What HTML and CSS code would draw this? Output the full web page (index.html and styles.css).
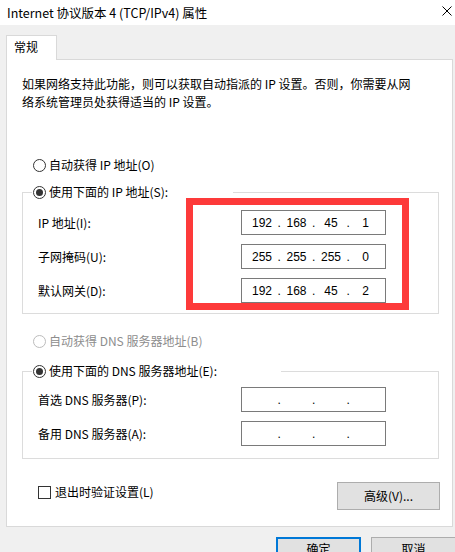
FILE: index.html
```html
<!DOCTYPE html>
<html lang="zh-CN">
<head>
<meta charset="utf-8">
<title>Internet 协议版本 4 (TCP/IPv4) 属性</title>
<link rel="stylesheet" href="styles.css">
</head>
<body>
<div class="window">
  <div class="titlebar">
    <span class="title">Internet 协议版本 4 (TCP/IPv4) 属性</span>
    <svg class="close" width="10" height="10" viewBox="0 0 10 10"><path d="M0.5 0.5 L9.5 9.5 M9.5 0.5 L0.5 9.5" stroke="#000" stroke-width="1" fill="none"/></svg>
  </div>
  <div class="body">
    <div class="tabs"><div class="tab">常规</div></div>
    <div class="panel">
      <p class="desc">如果网络支持此功能，则可以获取自动指派的 IP 设置。否则，你需要从网<br>络系统管理员处获得适当的 IP 设置。</p>

      <div class="option first"><span class="radio"></span><span>自动获得 IP 地址(O)</span></div>

      <fieldset class="group ip-group">
        <legend class="legend ip-legend"><span class="radio on"></span><span>使用下面的 IP 地址(S):</span></legend>
        <div class="row"><span>IP 地址(I):</span>
          <div class="ipbox"><span class="seg">192</span><span class="dot">.</span><span class="seg">168</span><span class="dot">.</span><span class="seg">45</span><span class="dot">.</span><span class="seg">1</span></div>
        </div>
        <div class="row"><span>子网掩码(U):</span>
          <div class="ipbox"><span class="seg">255</span><span class="dot">.</span><span class="seg">255</span><span class="dot">.</span><span class="seg">255</span><span class="dot">.</span><span class="seg">0</span></div>
        </div>
        <div class="row"><span>默认网关(D):</span>
          <div class="ipbox"><span class="seg">192</span><span class="dot">.</span><span class="seg">168</span><span class="dot">.</span><span class="seg">45</span><span class="dot">.</span><span class="seg">2</span></div>
        </div>
      </fieldset>

      <div class="option disabled"><span class="radio"></span><span>自动获得 DNS 服务器地址(B)</span></div>

      <fieldset class="group dns-group">
        <legend class="legend dns-legend"><span class="radio on"></span><span>使用下面的 DNS 服务器地址(E):</span></legend>
        <div class="row"><span>首选 DNS 服务器(P):</span>
          <div class="ipbox"><span class="seg"></span><span class="dot">.</span><span class="seg"></span><span class="dot">.</span><span class="seg"></span><span class="dot">.</span><span class="seg"></span></div>
        </div>
        <div class="row"><span>备用 DNS 服务器(A):</span>
          <div class="ipbox"><span class="seg"></span><span class="dot">.</span><span class="seg"></span><span class="dot">.</span><span class="seg"></span><span class="dot">.</span><span class="seg"></span></div>
        </div>
      </fieldset>

      <div class="footer-row">
        <label class="check"><span class="checkbox"></span><span>退出时验证设置(L)</span></label>
        <button class="btn advanced">高级(V)...</button>
      </div>
    </div>
    <div class="dialog-buttons">
      <button class="btn ok">确定</button>
      <button class="btn">取消</button>
    </div>
  </div>
  <div class="highlight"></div>
</div>
</body>
</html>
```

FILE: styles.css
```css
* { box-sizing: border-box; }
html, body { margin: 0; padding: 0; }
body {
  width: 455px;
  height: 552px;
  overflow: hidden;
  background: #f0f0f0;
  font-family: "Noto Sans CJK SC", "Noto Sans", sans-serif;
  font-size: 12px;
  line-height: 18px;
  color: #000;
}
.window { position: relative; width: 455px; height: 552px; }
.titlebar {
  height: 25px;
  background: #fff;
  display: flex;
  align-items: center;
  justify-content: space-between;
  padding: 0 3px 0 7px;
}
.title { font-size: 12.5px; }
.close { display: block; margin-top: -4px; }
.body { padding: 10px 2px 0 6px; }
.tabs { display: flex; height: 24px; }
.tab {
  width: 51px;
  height: 25px;
  background: #fff;
  border: 1px solid #d9d9d9;
  border-bottom: none;
  padding: 2px 0 0 7px;
  position: relative;
  z-index: 1;
}
.panel {
  background: #fff;
  border: 1px solid #d9d9d9;
  height: 468px;
  padding: 15px 14px 0 15px;
}
.desc { margin: 0; line-height: 18px; }
.option { display: flex; align-items: center; height: 18px; margin-left: 11px; }
.option.first { margin-top: 45px; }
.option.disabled { margin-top: 18px; color: #8d8d8d; }
.option.disabled .radio { border-color: #bcbcbc; }
.radio {
  width: 13px;
  height: 13px;
  border: 1px solid #333;
  border-radius: 50%;
  margin-right: 3px;
  display: inline-flex;
  align-items: center;
  justify-content: center;
  flex: none;
}
.radio.on::after {
  content: "";
  width: 7px;
  height: 7px;
  border-radius: 50%;
  background: #333;
}
.group {
  margin: 0;
  border: 1px solid #dcdcdc;
  width: 417px;
  padding: 0 0 10px 15px;
}
.ip-group { margin-top: 9px; padding-top: 9px; }
.dns-group { margin-top: 12px; padding-top: 7px; padding-bottom: 12px; }
.legend {
  display: flex;
  align-items: center;
  height: 18px;
  padding: 0 0 0 1px;
  margin-left: -6px;
}
.ip-legend { width: 201px; }
.dns-legend { width: 249px; }
.row {
  display: grid;
  grid-template-columns: 203px 145px;
  align-items: center;
  height: 25px;
  margin-bottom: 9px;
}
.row:last-child { margin-bottom: 0; }
.ipbox {
  height: 25px;
  border: 1px solid #7a7a7a;
  display: flex;
  align-items: center;
  padding-left: 4px;
  font-family: "Liberation Sans", Arial, sans-serif;
  font-size: 12px;
}
.seg { width: 32px; text-align: center; }
.dot { width: 2.5px; display: flex; justify-content: center; }
.footer-row {
  display: flex;
  align-items: flex-start;
  justify-content: space-between;
  margin-top: 23px;
  padding-left: 16px;
  width: 418px;
}
.check { display: flex; align-items: center; margin-top: 1px; }
.checkbox {
  width: 13px;
  height: 13px;
  border: 1px solid #333;
  margin-right: 4px;
  background: #fff;
}
.btn {
  font-family: inherit;
  font-size: 12px;
  line-height: 18px;
  background: #e1e1e1;
  border: 1px solid #adadad;
  color: #000;
  padding: 0;
  margin: 0;
}
.advanced { width: 103px; height: 28px; }
.dialog-buttons {
  display: flex;
  justify-content: flex-end;
  gap: 10px;
  margin-top: 10px;
  margin-right: -3px;
}
.dialog-buttons .btn { width: 85px; height: 23px; }
.btn.ok { border: 2px solid #0078d7; }
.highlight {
  position: absolute;
  left: 186px;
  top: 198px;
  width: 223px;
  height: 112px;
  border: 7px solid #fd3a3a;
  pointer-events: none;
}
```
